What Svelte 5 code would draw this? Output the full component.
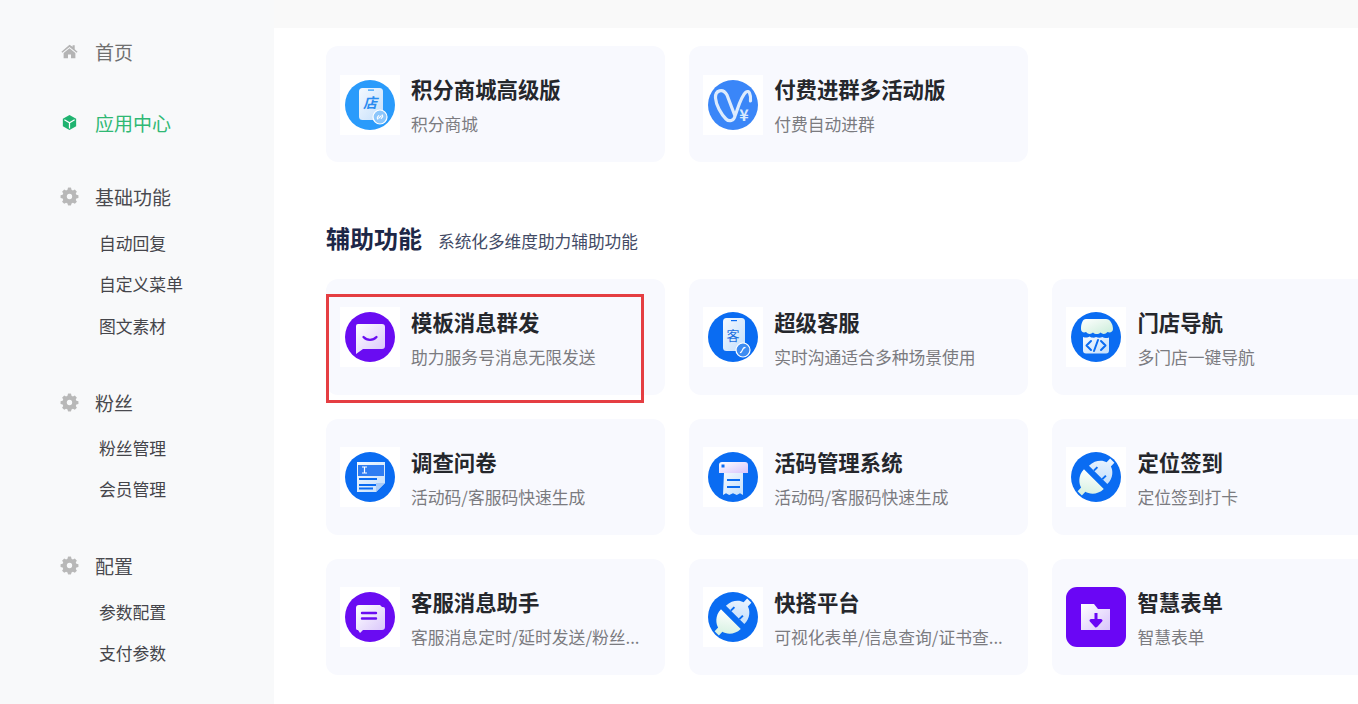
<script lang="ts">
  const nav = [
    { icon: 'home', label: '首页', subs: [], cls: 'muted' },
    { icon: 'cube', label: '应用中心', subs: [], cls: 'active' },
    { icon: 'gear', label: '基础功能', subs: ['自动回复', '自定义菜单', '图文素材'], cls: '' },
    { icon: 'gear', label: '粉丝', subs: ['粉丝管理', '会员管理'], cls: '' },
    { icon: 'gear', label: '配置', subs: ['参数配置', '支付参数'], cls: '' }
  ];

  const topApps = [
    { icon: 'shop', title: '积分商城高级版', desc: '积分商城' },
    { icon: 'pay', title: '付费进群多活动版', desc: '付费自动进群' }
  ];

  const toolApps = [
    { icon: 'msg', title: '模板消息群发', desc: '助力服务号消息无限发送', marked: true },
    { icon: 'kefu', title: '超级客服', desc: '实时沟通适合多种场景使用' },
    { icon: 'store', title: '门店导航', desc: '多门店一键导航' },
    { icon: 'form', title: '调查问卷', desc: '活动码/客服码快速生成' },
    { icon: 'printer', title: '活码管理系统', desc: '活动码/客服码快速生成' },
    { icon: 'plug', title: '定位签到', desc: '定位签到打卡' },
    { icon: 'chat', title: '客服消息助手', desc: '客服消息定时/延时发送/粉丝...' },
    { icon: 'plug', title: '快搭平台', desc: '可视化表单/信息查询/证书查...' },
    { icon: 'folder', title: '智慧表单', desc: '智慧表单' }
  ];
</script>

{#snippet navIcon(name)}
  <svg class="nav-icon" viewBox="0 0 20 20">
    {#if name === 'home'}
      <path fill="#b4b4b4" d="M10 3 1.500 10.200l1 1.200L10 5.200l7.500 6.200 1-1.200-3-2.500V3.500h-2.200v1.600z" />
      <path fill="#b4b4b4" d="M10 6.600 3.800 11.700V17h4.600v-3.800h3.200V17h4.600v-5.300z" />
    {:else if name === 'cube'}
      <path fill="#1fb36f" d="M10 2.200 17 6v8l-7 3.800L3 14V6z" />
      <path fill="none" stroke="#fff" stroke-width="1.300" d="M4.600 7.100 10 10.200l5.400-3.100M10 10.200v6" />
    {:else}
      <path fill="#b8b8b8" d="M8.400 2h3.200l.5 2.200 1.500.7 2-1.100 2.200 2.400-1.200 1.900.6 1.500 2.200.6v3.100l-2.200.6-.6 1.500 1.200 1.900-2.200 2.300-2-1.100-1.500.7-.5 2.100H8.400" transform="translate(0 -1) scale(1 .95)" />
      <path fill="#b8b8b8" d="M11.600 2H8.400l-.5 2.200-1.500.7-2-1.100-2.200 2.400 1.200 1.900-.6 1.500-2.200.6v3.100l2.200.6.6 1.500-1.200 1.900 2.200 2.300 2-1.100 1.500.7.500 2.100h3.200" transform="translate(0 -1) scale(1 .95)" />
      <circle cx="10" cy="10" r="2.800" fill="#f8f9fa" />
    {/if}
  </svg>
{/snippet}

{#snippet appIcon(name)}
  <svg class="app-icon" viewBox="0 0 60 60">
    <defs>
      <linearGradient id="pale" x1="0" y1="0" x2="1" y2="1">
        <stop offset="0" stop-color="#f4f9ff" />
        <stop offset="1" stop-color="#c4dffb" />
      </linearGradient>
      <linearGradient id="lilac" x1="0" y1="0" x2="1" y2="1">
        <stop offset="0" stop-color="#ffffff" />
        <stop offset="1" stop-color="#d8c4fb" />
      </linearGradient>
      <linearGradient id="mint" x1="0" y1="0" x2="1" y2="1">
        <stop offset="0" stop-color="#ffffff" />
        <stop offset="1" stop-color="#c9ecd8" />
      </linearGradient>
    </defs>
    <rect width="60" height="60" fill={name === 'folder' ? 'none' : '#fff'} />
    {#if name === 'shop'}
      <circle cx="30" cy="30" r="25" fill="#2a9bfb" />
      <rect x="19" y="13" width="24" height="32" rx="3.500" fill="url(#pale)" />
      <rect x="28" y="14.500" width="6" height="1.200" fill="#2a9bfb" />
      <text x="30" y="33" class="glyph" font-size="14" font-weight="700" font-style="italic" fill="#2a8cf0">店</text>
      <circle cx="40" cy="42" r="7" fill="#8cc6fb" stroke="#fff" stroke-width="1.200" />
      <path d="M37.800 44.200a1.800 1.800 0 0 1 0-2.500l1-1M42.200 39.800a1.800 1.800 0 0 1 0 2.500l-1 1M38.800 43.200l2.400-2.400" fill="none" stroke="#fff" stroke-width="1.100" stroke-linecap="round" />
    {:else if name === 'pay'}
      <circle cx="30" cy="30" r="25" fill="#3a86f8" />
      <path d="M32 41C31 46 26 47 23 44 18 39 13 30 12.500 23 12 15 20 13 24 20L32 41C35 33 38 21 43 17 46 15 48 19 47.500 26" fill="none" stroke="#dcebfd" stroke-width="3.200" stroke-linecap="round" stroke-linejoin="round" />
      <text x="41" y="46" class="glyph" font-size="16" font-weight="700" fill="#d8e9fd">¥</text>
    {:else if name === 'msg'}
      <circle cx="30" cy="30" r="25" fill="#6a0cf2" />
      <path d="M18 17h24a3 3 0 0 1 3 3v19a3 3 0 0 1-3 3H23l-7 5V19a2 2 0 0 1 2-2z" fill="url(#lilac)" />
      <path d="M23.500 30c3.500 3.800 9.500 3.800 13 0" fill="none" stroke="#6a0cf2" stroke-width="2.300" stroke-linecap="round" />
    {:else if name === 'kefu'}
      <circle cx="30" cy="30" r="25" fill="#0a6cf2" />
      <rect x="20" y="11" width="22" height="33" rx="3.500" fill="url(#pale)" />
      <rect x="28" y="13" width="6" height="1.200" fill="#0a6cf2" />
      <text x="30" y="33" class="glyph" font-size="13" fill="#1a6fe0">客</text>
      <circle cx="40" cy="43" r="7" fill="#3d8cf2" stroke="#fff" stroke-width="1.200" />
      <path d="M37.500 45.500c2 0 1.500-5 4.500-5" fill="none" stroke="#fff" stroke-width="1.300" stroke-linecap="round" />
    {:else if name === 'store'}
      <circle cx="30" cy="30" r="25" fill="#0a6cf2" />
      <path d="M20 12h20c4 0 7 5 7 10 0 3-3 4-5.500 3-2 2.500-5 2.500-7 .5-2 2-5.500 2-7.500 0-2 2-5 2-7-.5-2.500 1-5 0-5-3 0-5 1.500-10 5-10z" fill="url(#mint)" />
      <path d="M17 30c3 1 5 .5 6.500-.5 2 1.500 5 1.500 6.500.5 2 1 4.500 1 6.500 0 1.500 1 4 1.500 6.500.5v13a3 3 0 0 1-3 3H20a3 3 0 0 1-3-3z" fill="url(#pale)" />
      <path d="M25 34l-4.500 4.500L25 43M35 34l4.500 4.500L35 43M32 33l-4 11" fill="none" stroke="#0a6cf2" stroke-width="2" stroke-linecap="round" stroke-linejoin="round" />
    {:else if name === 'form'}
      <circle cx="30" cy="30" r="25" fill="#0a6cf2" />
      <path d="M17 15h28v21l-9 9H17z" fill="url(#pale)" />
      <rect x="18" y="18" width="26" height="11" fill="#2f7df2" />
      <path d="M22 20h5M24.500 20v6M22 26h5" stroke="#fff" stroke-width="1.200" />
      <path d="M19 32h18M19 38h23M19 41.500h14" stroke="#0a6cf2" stroke-width="1.900" />
      <path d="M45 36H36v9z" fill="#a9ccf8" />
    {:else if name === 'printer'}
      <circle cx="30" cy="30" r="25" fill="#0a6cf2" />
      <path d="M19 15h23a3 3 0 0 1 3 3v8H16v-8a3 3 0 0 1 3-3z" fill="url(#lilac)" />
      <rect x="18.500" y="17.500" width="3" height="3" fill="#0a6cf2" />
      <path d="M21 26h19v22l-3-1.800-3.200 1.800-3.800-1.800-3.800 1.800-3.200-1.800-3 1.800z" fill="url(#pale)" />
      <path d="M24 33h13M24 40h13" stroke="#0a6cf2" stroke-width="2.200" />
    {:else if name === 'plug'}
      <circle cx="30" cy="30" r="25" fill="#0a6cf2" />
      <g transform="rotate(45 30 30)">
        <path d="M16 33h28c0 9-7 14-11 15v5h-6v-5c-4-1-11-6-11-15z" fill="url(#mint)" />
        <path d="M17 27c0-9 6-14 10-15V7h6v5c4 1 10 6 10 15z" fill="url(#pale)" />
        <rect x="23" y="22" width="2" height="5" fill="#0a6cf2" />
        <rect x="35" y="22" width="2" height="5" fill="#0a6cf2" />
      </g>
    {:else if name === 'chat'}
      <circle cx="30" cy="30" r="25" fill="#6a0cf2" />
      <path d="M19 18h21l2 2h1a2 2 0 0 1 2 2v18a3 3 0 0 1-3 3H23l-3 3-2-3h-1a2 2 0 0 1-1-2V21a3 3 0 0 1 3-3z" fill="url(#lilac)" />
      <path d="M22 26h14M22 31.500h14" stroke="#6a0cf2" stroke-width="2.400" stroke-linecap="round" />
    {:else}
      <rect width="60" height="60" rx="11" fill="#6a06f5" />
      <path d="M15 17h13l4 5h12v21H15z" fill="url(#lilac)" />
      <path d="M30 26v8M25 33.500 30 39l5-5.500z" stroke="#6a06f5" stroke-width="3" fill="#6a06f5" stroke-linejoin="round" />
    {/if}
  </svg>
{/snippet}

{#snippet card(app)}
  <div class="card">
    {@render appIcon(app.icon)}
    <div class="card-text">
      <div class="card-title">{app.title}</div>
      <div class="card-desc">{app.desc}</div>
    </div>
    {#if app.marked}<div class="marker"></div>{/if}
  </div>
{/snippet}

<div class="page">
  <aside class="sidebar">
    {#each nav as item}
      <div class="group">
        <div class="head {item.cls}">
          {@render navIcon(item.icon)}
          <span>{item.label}</span>
        </div>
        {#each item.subs as sub}
          <div class="sub">{sub}</div>
        {/each}
      </div>
    {/each}
  </aside>

  <main class="main">
    <div class="grid">
      {#each topApps as app}
        {@render card(app)}
      {/each}
    </div>

    <div class="section-head">
      <h2>辅助功能</h2>
      <span>系统化多维度助力辅助功能</span>
    </div>

    <div class="grid">
      {#each toolApps as app}
        {@render card(app)}
      {/each}
    </div>
  </main>
</div>

<style>
  :global(body) {
    margin: 0;
    background: #f9f9f9;
    overflow: hidden;
  }
  .page {
    display: flex;
    height: 704px;
    overflow: hidden;
    font-family: "Noto Sans CJK SC", "Noto Sans", sans-serif;
  }
  .sidebar {
    flex: 0 0 274px;
    box-sizing: border-box;
    padding: 31px 0 0 60px;
    background: #f8f9fa;
  }
  .group:nth-child(1) {
    margin-bottom: 31px;
  }
  .group:nth-child(2) {
    margin-bottom: 34.500px;
  }
  .group:nth-child(3) {
    margin-bottom: 35.500px;
  }
  .group:nth-child(4) {
    margin-bottom: 35px;
  }
  .group:nth-child(3) .head {
    margin-bottom: 6px;
  }
  .group:nth-child(4) .head {
    margin-bottom: 5px;
  }
  .group:nth-child(5) .head {
    margin-bottom: 6px;
  }
  .head {
    display: flex;
    align-items: center;
    height: 40px;
    font-size: 19px;
    color: #4a4a4f;
  }
  .head.muted {
    color: #6f6f6f;
  }
  .head.active {
    color: #2fb874;
  }
  .nav-icon {
    width: 19px;
    height: 19px;
    margin-right: 16px;
  }
  .sub {
    height: 41.500px;
    line-height: 41.500px;
    padding-left: 39px;
    font-size: 16.800px;
    color: #45454a;
  }
  .main {
    flex: 0 0 1084px;
    box-sizing: border-box;
    margin-top: 28px;
    padding: 18px 0 0 52px;
    background: #fff;
    overflow: hidden;
  }
  .grid {
    display: grid;
    grid-template-columns: repeat(3, 339.200px);
    gap: 24px;
  }
  .grid:first-child .app-icon {
    margin-top: 29px;
  }
  .section-head {
    display: flex;
    align-items: baseline;
    height: 34px;
    margin: 58px 0 25px;
  }
  .section-head h2 {
    margin: 0 16px 0 0;
    font-size: 24px;
    font-weight: 700;
    color: #1d2747;
  }
  .section-head span {
    margin-top: 1px;
    font-size: 16.670px;
    color: #434b66;
  }
  .card {
    position: relative;
    display: flex;
    height: 116px;
    box-sizing: border-box;
    padding-left: 14px;
    background: #f8f9fe;
    border-radius: 12px;
  }
  .app-icon {
    flex: 0 0 60px;
    width: 60px;
    height: 60px;
    margin-top: 28px;
  }
  .glyph {
    text-anchor: middle;
    font-family: "Noto Sans CJK SC", sans-serif;
  }
  .card-text {
    min-width: 0;
    margin-left: 11px;
    padding-top: 28px;
  }
  .card-title {
    height: 30px;
    line-height: 30px;
    font-size: 21.400px;
    font-weight: 700;
    color: #25272c;
  }
  .card-desc {
    margin-top: 8px;
    height: 24px;
    line-height: 24px;
    font-size: 16.800px;
    color: #7b7b80;
    white-space: nowrap;
  }
  .marker {
    position: absolute;
    left: 0;
    top: 15px;
    width: 318px;
    height: 109px;
    box-sizing: border-box;
    border: 3px solid #e53e42;
  }
</style>
